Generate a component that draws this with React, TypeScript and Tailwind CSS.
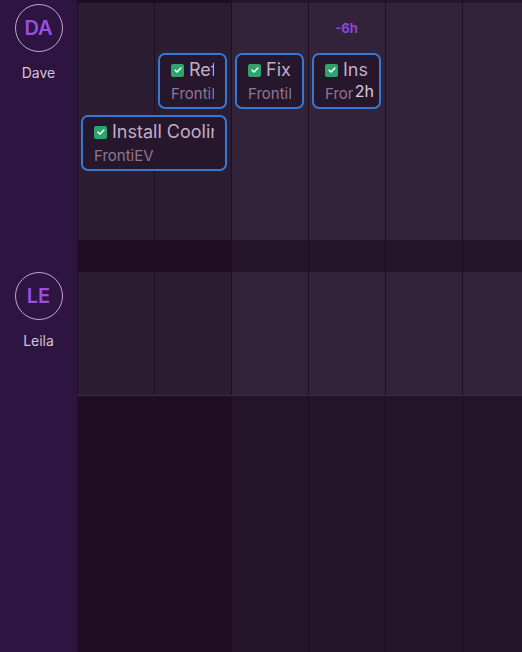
import React from 'react';

const COLS = [true, true, false, false, false, false]; // weekend flag per column

function Cells({ kind }: { kind: 'row' | 'gap' }) {
  return (
    <>
      {COLS.map((weekend, i) => (
        <div
          key={i}
          className={`w-[77px] shrink-0 border-l border-[#1c0f20] ${
            kind === 'row'
              ? weekend
                ? 'bg-[#2c1e32]'
                : 'bg-[#32233a]'
              : weekend
                ? 'bg-[#1f0e23]'
                : 'bg-[#25152a]'
          }`}
        />
      ))}
    </>
  );
}

function Check() {
  return (
    <span className="flex h-[13px] w-[13px] shrink-0 items-center justify-center rounded-[2px] bg-[#2fa36d]">
      <svg viewBox="0 0 12 12" className="h-[10px] w-[10px]" fill="none" stroke="#ffffff" strokeWidth="1.8" strokeLinecap="round" strokeLinejoin="round">
        <path d="M2.5 6.2l2.3 2.3 4.7-4.9" />
      </svg>
    </span>
  );
}

function Card({
  left,
  top,
  width,
  title,
  sub,
  badge,
}: {
  left: number;
  top: number;
  width: number;
  title: string;
  sub: string;
  badge?: string;
}) {
  return (
    <div
      className="absolute h-[56px] overflow-hidden rounded-[7px] border-2 border-[#3877d2] bg-[#27172d] pl-[11px] pr-[11px] pt-[4px]"
      style={{ left, top, width }}
    >
      <div className="flex h-[22px] items-center gap-[5px] overflow-hidden">
        <Check />
        <span className="whitespace-nowrap text-[18px] leading-[22px] text-[#c0aec6]">{title}</span>
      </div>
      <div className="mt-[3px] overflow-hidden whitespace-nowrap text-[15px] leading-[20px] text-[#8b7791]">{sub}</div>
      {badge && (
        <span className="absolute bottom-[6px] right-[5px] bg-[#27172d] pl-[2px] text-[16px] leading-[20px] text-[#d9cfe0]">
          {badge}
        </span>
      )}
    </div>
  );
}

function Avatar({ initials, name }: { initials: string; name: string }) {
  return (
    <div className="flex flex-col items-center">
      <div className="flex h-[48px] w-[48px] items-center justify-center rounded-full border-[1.5px] border-[#c7a3cf]">
        <span className="text-[20px] font-semibold text-[#9a4fe0]">{initials}</span>
      </div>
      <span className="mt-[11px] text-[14px] leading-[20px] text-[#d3c3d9]">{name}</span>
    </div>
  );
}

export default function App() {
  return (
    <div className="flex h-[652px] w-[522px] overflow-hidden bg-[#1e0d22] font-['Inter',sans-serif]">
      {/* People */}
      <div className="w-[77px] shrink-0 bg-[#2e1440]">
        <div className="h-[272px] pt-[4px]">
          <Avatar initials="DA" name="Dave" />
        </div>
        <Avatar initials="LE" name="Leila" />
      </div>

      {/* Timeline */}
      <div className="flex min-w-0 flex-1 flex-col">
        <div className="flex h-[3px] shrink-0">
          <Cells kind="gap" />
        </div>

        <div className="relative flex h-[237px] shrink-0">
          <Cells kind="row" />
          <div className="absolute left-[231px] top-[17px] w-[77px] text-center text-[13px] font-bold leading-[16px] text-[#8e45d8]">
            -6h
          </div>
          <Card left={81} top={50} width={69} title="Refurbish Battery" sub="FrontiEV" />
          <Card left={158} top={50} width={69} title="Fix Charger" sub="FrontiEV" />
          <Card left={235} top={50} width={69} title="Install Panel" sub="FrontiEV" badge="2h" />
          <Card left={4} top={112} width={146} title="Install Cooling" sub="FrontiEV" />
        </div>

        <div className="flex h-[32px] shrink-0">
          <Cells kind="gap" />
        </div>

        <div className="flex h-[124px] shrink-0 border-b border-[#3a2b41]">
          <Cells kind="row" />
        </div>

        <div className="flex flex-1">
          <Cells kind="gap" />
        </div>
      </div>
    </div>
  );
}
